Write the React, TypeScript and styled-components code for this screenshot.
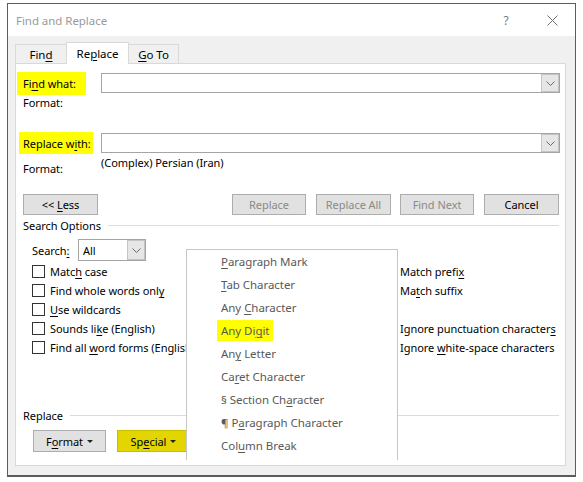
import React from "react";
import styled, { createGlobalStyle } from "styled-components";

const Global = createGlobalStyle`
  html, body { margin: 0; padding: 0; background: #ffffff; }
  body {
    font-family: "Noto Sans", "Segoe UI", "Liberation Sans", sans-serif;
    font-size: 11px;
    letter-spacing: -0.05px;
    color: #000;
  }
  u { text-decoration: underline; text-underline-offset: 2px; text-decoration-thickness: 1px; }
  * { box-sizing: border-box; }
`;

const Window = styled.div`
  margin: 3px 0 0 7px;
  width: 569px;
  height: 474px;
  border: 1px solid #5c5c5c;
  border-bottom-width: 2px;
  background: #f0f0f0;
  display: flex;
  flex-direction: column;
`;

const TitleBar = styled.div`
  height: 32px;
  background: #ffffff;
  display: flex;
  align-items: center;
  padding-left: 8px;
`;

const Title = styled.div`
  flex: 1;
  color: #9a9a9a;
  font-size: 11.5px;
`;

const TitleButton = styled.div`
  width: 46px;
  height: 32px;
  display: flex;
  align-items: center;
  justify-content: center;
  color: #7a7a7a;
  font-size: 12px;
`;

const Body = styled.div`
  flex: 1;
  display: flex;
  flex-direction: column;
  padding: 6px 9px 9px 7px;
`;

const TabRow = styled.div`
  height: 21px;
  display: flex;
  align-items: flex-end;
`;

const Tab = styled.div<{ $active?: boolean; $w: number }>`
  width: ${(p) => p.$w}px;
  height: ${(p) => (p.$active ? 22 : 19)}px;
  margin-bottom: ${(p) => (p.$active ? -1 : 0)}px;
  margin-left: -1px;
  &:first-child { margin-left: 0; }
  background: ${(p) => (p.$active ? "#ffffff" : "#f0f0f0")};
  border: 1px solid #d9d9d9;
  border-bottom: none;
  position: relative;
  z-index: ${(p) => (p.$active ? 2 : 1)};
  display: flex;
  align-items: center;
  justify-content: center;
  padding-top: ${(p) => (p.$active ? 0 : 1)}px;
  font-size: 11.5px;
`;

const Panel = styled.div`
  flex: 1;
  background: #ffffff;
  border: 1px solid #d9d9d9;
  position: relative;
  display: flex;
  flex-direction: column;
`;

const FieldRow = styled.div<{ $top: number; $h: number }>`
  display: grid;
  grid-template-columns: 85px 1fr;
  margin-top: ${(p) => p.$top}px;
  height: ${(p) => p.$h}px;
  padding-right: 5px;
`;

const Highlight = styled.div<{ $ml: number; $pl: number; $w: number }>`
  margin-left: ${(p) => p.$ml}px;
  padding-left: ${(p) => p.$pl}px;
  width: ${(p) => p.$w}px;
  background: #ffff00;
  display: flex;
  align-items: center;
  white-space: nowrap;
`;

const Combo = styled.div`
  margin-top: 1px;
  height: 20px;
  border: 1px solid #a5a5a5;
  background: #fff;
  display: flex;
  justify-content: flex-end;
`;

const ComboArrow = styled.div<{ $w?: number }>`
  width: ${(p) => p.$w ?? 18}px;
  height: 100%;
  background: #e6e6e6;
  border: 1px solid #c4c4c4;
  display: flex;
  align-items: center;
  justify-content: center;
`;

const FormatRow = styled.div`
  display: grid;
  grid-template-columns: 85px 1fr;
  line-height: 16px;
`;

const FormatLabel = styled.div<{ $pt?: number }>`
  padding-left: 7px;
  padding-top: ${(p) => p.$pt ?? 0}px;
`;

const FormatValue = styled.div<{ $pt?: number }>`
  padding-top: ${(p) => p.$pt ?? 0}px;
`;

const ButtonRow = styled.div<{ $top: number; $h: number; $pl: number }>`
  display: flex;
  margin-top: ${(p) => p.$top}px;
  height: ${(p) => p.$h}px;
  padding-left: ${(p) => p.$pl}px;
  padding-right: 6px;
`;

const Button = styled.div<{ $w: number; $ml?: number; $disabled?: boolean; $yellow?: boolean }>`
  width: ${(p) => p.$w}px;
  margin-left: ${(p) => p.$ml ?? 0}px;
  height: 100%;
  background: ${(p) => (p.$yellow ? "#e2d500" : "#e1e1e1")};
  border: 1px solid ${(p) => (p.$yellow ? "#c9bd00" : "#adadad")};
  color: ${(p) => (p.$disabled ? "#8a8a8a" : "#000")};
  display: flex;
  align-items: center;
  justify-content: center;
  gap: 4px;
  white-space: nowrap;
`;

const Spacer = styled.div`
  flex: 1;
`;

const Legend = styled.div<{ $top: number }>`
  display: flex;
  align-items: center;
  gap: 7px;
  margin-top: ${(p) => p.$top}px;
  padding-left: 7px;
  padding-right: 6px;
  line-height: 16px;
  &::after {
    content: "";
    flex: 1;
    height: 1px;
    background: #dcdcdc;
    margin-top: -1px;
  }
`;

const SearchRow = styled.div`
  display: flex;
  align-items: center;
  margin-top: 5px;
  padding-left: 16px;
  height: 22px;
`;

const SearchLabel = styled.div`
  width: 46px;
`;

const Select = styled.div`
  width: 68px;
  height: 22px;
  border: 1px solid #a5a5a5;
  display: flex;
  align-items: center;
  padding-left: 4px;
`;

const SelectText = styled.div`
  flex: 1;
`;

const OptionsGrid = styled.div`
  display: grid;
  grid-template-columns: 368px 1fr;
  grid-auto-rows: 19px;
  margin-top: 1px;
  padding-left: 16px;
`;

const Option = styled.div`
  display: flex;
  align-items: center;
  gap: 5px;
  white-space: nowrap;
`;

const Checkbox = styled.div`
  width: 13px;
  height: 13px;
  border: 1px solid #333333;
  background: #fff;
  flex-shrink: 0;
`;

const Menu = styled.div`
  position: absolute;
  left: 170px;
  top: 185px;
  width: 212px;
  height: 211px;
  background: #ffffff;
  border: 1px solid #c6c6c6;
  border-bottom: none;
  z-index: 5;
`;

const MenuItem = styled.div`
  height: 23px;
  display: flex;
  align-items: center;
  padding-left: 34px;
  font-size: 11.5px;
  color: #595959;
  white-space: nowrap;
`;

const MenuHighlight = styled.span`
  background: #ffff00;
  margin-left: -4px;
  padding: 0 4px;
  line-height: 21px;
`;

const Chevron = () => (
  <svg width="9" height="5" viewBox="0 0 9 5">
    <path d="M0.5 0.5 L4.5 4.5 L8.5 0.5" fill="none" stroke="#6a6a6a" strokeWidth="1" />
  </svg>
);

const DropTri = () => (
  <svg width="6" height="3" viewBox="0 0 6 3">
    <path d="M0 0 H6 L3 3 Z" fill="#222" />
  </svg>
);

const CloseIcon = () => (
  <svg width="11" height="11" viewBox="0 0 11 11">
    <path d="M0.5 0.5 L10.5 10.5 M10.5 0.5 L0.5 10.5" stroke="#6e6e6e" strokeWidth="1" />
  </svg>
);

const menuItems: React.ReactNode[] = [
  <span><u>P</u>aragraph Mark</span>,
  <span><u>T</u>ab Character</span>,
  <span>Any <u>C</u>haracter</span>,
  <MenuHighlight>Any Di<u>g</u>it</MenuHighlight>,
  <span>An<u>y</u> Letter</span>,
  <span>Ca<u>r</u>et Character</span>,
  <span>§ Section Ch<u>a</u>racter</span>,
  <span>¶ P<u>a</u>ragraph Character</span>,
  <span>Col<u>u</u>mn Break</span>,
];

export default function App() {
  return (
    <>
      <Global />
      <Window>
        <TitleBar>
          <Title>Find and Replace</Title>
          <TitleButton>?</TitleButton>
          <TitleButton>
            <CloseIcon />
          </TitleButton>
        </TitleBar>
        <Body>
          <TabRow>
            <Tab $w={52}>
              <span>Fin<u>d</u></span>
            </Tab>
            <Tab $w={63} $active>
              <span>Re<u>p</u>lace</span>
            </Tab>
            <Tab $w={51}>
              <span><u>G</u>o To</span>
            </Tab>
          </TabRow>
          <Panel>
            <FieldRow $top={8} $h={23}>
              <Highlight $ml={1} $pl={6} $w={69}>
                <span>Fi<u>n</u>d what:</span>
              </Highlight>
              <Combo>
                <ComboArrow>
                  <Chevron />
                </ComboArrow>
              </Combo>
            </FieldRow>
            <FormatRow>
              <FormatLabel>Format:</FormatLabel>
              <FormatValue />
            </FormatRow>
            <FieldRow $top={21} $h={22}>
              <Highlight $ml={3} $pl={4} $w={74}>
                <span>Replace w<u>i</u>th:</span>
              </Highlight>
              <Combo>
                <ComboArrow>
                  <Chevron />
                </ComboArrow>
              </Combo>
            </FieldRow>
            <FormatRow>
              <FormatLabel $pt={7}>Format:</FormatLabel>
              <FormatValue $pt={1}>(Complex) Persian (Iran)</FormatValue>
            </FormatRow>
            <ButtonRow $top={17} $h={21} $pl={7}>
              <Button $w={75}>
                <span>&lt;&lt; <u>L</u>ess</span>
              </Button>
              <Spacer />
              <Button $w={74} $disabled>
                <span>Replace</span>
              </Button>
              <Button $w={75} $ml={10} $disabled>
                <span>Replace All</span>
              </Button>
              <Button $w={74} $ml={9} $disabled>
                <span>Find Next</span>
              </Button>
              <Button $w={75} $ml={10}>
                <span>Cancel</span>
              </Button>
            </ButtonRow>
            <Legend $top={3}>
              <span>Search Options</span>
            </Legend>
            <SearchRow>
              <SearchLabel>
                Search<u>:</u>
              </SearchLabel>
              <Select>
                <SelectText>All</SelectText>
                <ComboArrow $w={18}>
                  <Chevron />
                </ComboArrow>
              </Select>
            </SearchRow>
            <OptionsGrid>
              <Option>
                <Checkbox />
                <span>Matc<u>h</u> case</span>
              </Option>
              <Option>
                <span>Match prefi<u>x</u></span>
              </Option>
              <Option>
                <Checkbox />
                <span>Find whole words onl<u>y</u></span>
              </Option>
              <Option>
                <span>Ma<u>t</u>ch suffix</span>
              </Option>
              <Option>
                <Checkbox />
                <span><u>U</u>se wildcards</span>
              </Option>
              <Option />
              <Option>
                <Checkbox />
                <span>Sounds li<u>k</u>e (English)</span>
              </Option>
              <Option>
                <span>Ignore punctuation character<u>s</u></span>
              </Option>
              <Option>
                <Checkbox />
                <span>Find all <u>w</u>ord forms (English)</span>
              </Option>
              <Option>
                <span>Ignore <u>w</u>hite-space characters</span>
              </Option>
            </OptionsGrid>
            <Legend $top={51}>
              <span>Replace</span>
            </Legend>
            <ButtonRow $top={6} $h={22} $pl={17}>
              <Button $w={73}>
                <span>F<u>o</u>rmat</span>
                <DropTri />
              </Button>
              <Button $w={73} $ml={11} $yellow>
                <span>Sp<u>e</u>cial</span>
                <DropTri />
              </Button>
            </ButtonRow>
            <Menu>
              {menuItems.map((m, i) => (
                <MenuItem key={i}>{m}</MenuItem>
              ))}
            </Menu>
          </Panel>
        </Body>
      </Window>
    </>
  );
}
